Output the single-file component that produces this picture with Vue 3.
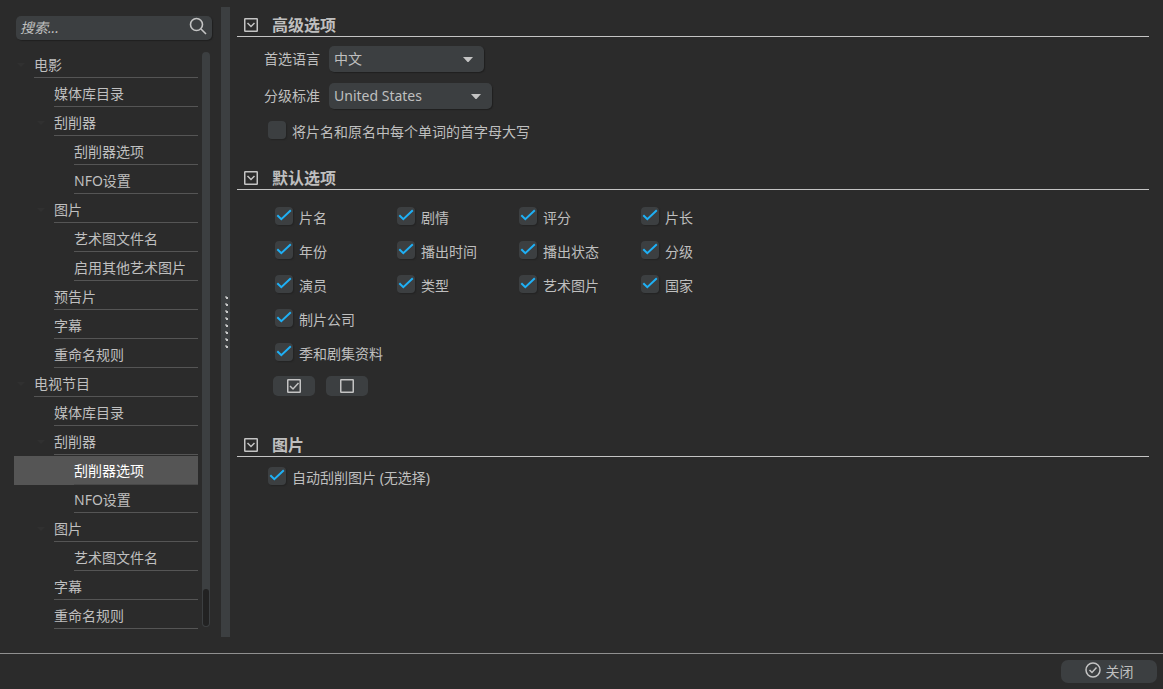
<script setup>
import { ref, reactive } from 'vue'

const tree = [
  { text: '电影', level: 1, parent: true },
  { text: '媒体库目录', level: 2 },
  { text: '刮削器', level: 2, parent: true },
  { text: '刮削器选项', level: 3 },
  { text: 'NFO设置', level: 3 },
  { text: '图片', level: 2, parent: true },
  { text: '艺术图文件名', level: 3 },
  { text: '启用其他艺术图片', level: 3 },
  { text: '预告片', level: 2 },
  { text: '字幕', level: 2 },
  { text: '重命名规则', level: 2 },
  { text: '电视节目', level: 1, parent: true },
  { text: '媒体库目录', level: 2 },
  { text: '刮削器', level: 2, parent: true },
  { text: '刮削器选项', level: 3 },
  { text: 'NFO设置', level: 3 },
  { text: '图片', level: 2, parent: true },
  { text: '艺术图文件名', level: 3 },
  { text: '字幕', level: 2 },
  { text: '重命名规则', level: 2 },
]
const selected = ref(14)
const search = ref('')
const language = ref('中文')
const certification = ref('United States')
const capitalize = ref(false)
const autoArtwork = ref(true)
const open = reactive({ advanced: true, defaults: true, images: true })

const fields = reactive(
  [
    ['片名', '剧情', '评分', '片长'],
    ['年份', '播出时间', '播出状态', '分级'],
    ['演员', '类型', '艺术图片', '国家'],
    ['制片公司'],
    ['季和剧集资料'],
  ].map((row) => row.map((name) => ({ name, on: true })))
)
const setAll = (on) => fields.forEach((row) => row.forEach((f) => (f.on = on)))
</script>

<template>
  <div class="window">
    <div class="body">
      <aside class="sidebar">
        <div class="search">
          <input v-model="search" type="text" placeholder="搜索..." aria-label="搜索" />
          <svg class="lens" viewBox="0 0 18 18" width="18" height="18" aria-hidden="true">
            <circle cx="7.5" cy="7.5" r="6" />
            <path d="M12 12l5 5" />
          </svg>
        </div>
        <div class="tree-area">
          <nav class="tree">
            <a
              v-for="(item, i) in tree"
              :key="i"
              href="#"
              :class="['node', 'level-' + item.level, { selected: selected === i }]"
              @click.prevent="selected = i"
            >
              <span class="expander"><i v-if="item.parent"></i></span>
              <span class="node-text">{{ item.text }}</span>
            </a>
          </nav>
          <div class="scrollbar"><div class="thumb"></div></div>
        </div>
      </aside>

      <div class="splitter">
        <svg viewBox="0 0 3 52" width="3" height="52" aria-hidden="true">
          <g v-for="n in 8" :key="n">
            <rect x="0" :y="(n - 1) * 7" width="2" height="2" fill="#8a8c8d" />
            <rect x="1" :y="(n - 1) * 7 + 1" width="2" height="2" fill="#c8c8c8" />
          </g>
        </svg>
      </div>

      <main class="content">
        <section class="advanced">
          <h2>
            <button class="toggle" type="button" aria-label="高级选项" @click="open.advanced = !open.advanced">
              <svg viewBox="0 0 14 14" width="14" height="14"><rect x="0.75" y="0.75" width="12.5" height="12.5" rx="0.5" /><path d="M3.5 5L7 8.5 10.5 5" /></svg>
            </button>
            <span>高级选项</span>
          </h2>
          <div v-show="open.advanced" class="panel">
            <div class="field">
              <label for="language">首选语言</label>
              <span class="combo">
                <select id="language" v-model="language" class="short"><option>中文</option></select>
                <svg viewBox="0 0 10 6" width="10" height="6"><path d="M0 0h10L5.5 5h-1z" /></svg>
              </span>
            </div>
            <div class="field">
              <label for="certification">分级标准</label>
              <span class="combo">
                <select id="certification" v-model="certification" class="long"><option>United States</option></select>
                <svg viewBox="0 0 10 6" width="10" height="6"><path d="M0 0h10L5.5 5h-1z" /></svg>
              </span>
            </div>
            <label class="check">
              <span class="box">
                <input v-model="capitalize" type="checkbox" />
                <svg v-if="capitalize" viewBox="0 0 18 18" width="18" height="18"><path d="M2.5 8l4 4L16 3" /></svg>
              </span>
              <span class="check-text">将片名和原名中每个单词的首字母大写</span>
            </label>
          </div>
        </section>

        <section class="defaults">
          <h2>
            <button class="toggle" type="button" aria-label="默认选项" @click="open.defaults = !open.defaults">
              <svg viewBox="0 0 14 14" width="14" height="14"><rect x="0.75" y="0.75" width="12.5" height="12.5" rx="0.5" /><path d="M3.5 5L7 8.5 10.5 5" /></svg>
            </button>
            <span>默认选项</span>
          </h2>
          <div v-show="open.defaults" class="panel">
            <div v-for="(row, r) in fields" :key="r" class="row">
              <label v-for="f in row" :key="f.name" class="check">
                <span class="box">
                  <input v-model="f.on" type="checkbox" />
                  <svg v-if="f.on" viewBox="0 0 18 18" width="18" height="18"><path d="M2.3 8.2l4 4L15.8 3.2" /></svg>
                </span>
                <span class="check-text">{{ f.name }}</span>
              </label>
            </div>
            <div class="actions">
              <button type="button" aria-label="全选" @click="setAll(true)">
                <svg viewBox="0 0 14 14" width="14" height="14"><rect x="0.75" y="0.75" width="12.5" height="12.5" rx="0.5" /><path d="M3 7l3 3 5.5-6" /></svg>
              </button>
              <button type="button" aria-label="全不选" @click="setAll(false)">
                <svg viewBox="0 0 14 14" width="14" height="14"><rect x="0.75" y="0.75" width="12.5" height="12.5" rx="0.5" /></svg>
              </button>
            </div>
          </div>
        </section>

        <section class="images">
          <h2>
            <button class="toggle" type="button" aria-label="图片" @click="open.images = !open.images">
              <svg viewBox="0 0 14 14" width="14" height="14"><rect x="0.75" y="0.75" width="12.5" height="12.5" rx="0.5" /><path d="M3.5 5L7 8.5 10.5 5" /></svg>
            </button>
            <span>图片</span>
          </h2>
          <div v-show="open.images" class="panel">
            <label class="check">
              <span class="box">
                <input v-model="autoArtwork" type="checkbox" />
                <svg v-if="autoArtwork" viewBox="0 0 18 18" width="18" height="18"><path d="M2.3 8.2l4 4L15.8 3.2" /></svg>
              </span>
              <span class="check-text">自动刮削图片 (无选择)</span>
            </label>
          </div>
        </section>
      </main>
    </div>

    <footer class="footer">
      <button class="close" type="button">
        <svg viewBox="0 0 16 16" width="16" height="16"><circle cx="8" cy="8" r="7" /><path d="M4.5 8L7 10.5l4.5-5" /></svg>
        <span>关闭</span>
      </button>
    </footer>
  </div>
</template>

<style>
body {
  background: #2b2b2b;
}
</style>

<style scoped>
.window {
  display: flex;
  flex-direction: column;
  min-height: 100vh;
  color: #bfbfbf;
  background: #2b2b2b;
  font: 14px/20px "Noto Sans", "Noto Sans CJK SC", sans-serif;
}
* {
  box-sizing: border-box;
}
button,
input,
select {
  margin: 0;
  padding: 0;
  border: 0;
  font: inherit;
  color: inherit;
  background: none;
}
svg {
  display: block;
  fill: none;
  stroke: #c4c4c4;
}
.body {
  flex: 1;
  display: flex;
}
.sidebar {
  display: flex;
  flex-direction: column;
  width: 221px;
  padding: 16px 9px 22px 14px;
}
.search {
  display: flex;
  align-items: center;
  height: 24px;
  margin-left: 2px;
  padding: 0 5px 0 4px;
  border-radius: 5px;
  background: #3c3f41;
  box-shadow: 1px 1px 1px #202020;
}
.search input {
  flex: 1;
  min-width: 0;
  outline: none;
}
.search input::placeholder {
  color: #bfbfbf;
  font-style: italic;
}
.lens {
  margin-bottom: 4px;
  stroke-width: 1.6;
}
.tree-area {
  flex: 1;
  display: flex;
  gap: 4px;
  padding: 10px 2px 0 0;
}
.tree {
  flex: 1;
}
.node {
  display: flex;
  height: 29px;
  color: inherit;
  text-decoration: none;
}
.expander {
  flex: none;
  display: flex;
  align-items: center;
  justify-content: flex-end;
  padding-right: 9px;
}
.expander i {
  border: 4px solid transparent;
  border-top-color: #303030;
  border-bottom: 0;
}
.level-1 .expander {
  width: 20px;
}
.level-2 .expander {
  width: 40px;
}
.level-3 .expander {
  width: 60px;
}
.node-text {
  flex: 1;
  height: 28px;
  border-bottom: 1px solid #555555;
  line-height: 29px;
  white-space: nowrap;
}
.selected {
  background: #555555;
  color: #ffffff;
}
.selected .node-text {
  height: 29px;
  border-color: #484848;
}
.scrollbar {
  display: flex;
  flex-direction: column;
  justify-content: flex-end;
  width: 8px;
  margin: 2px 0 4px;
  padding: 1px;
  border-radius: 4px;
  background: #3c3f41;
}
.thumb {
  height: 37px;
  border-radius: 3px;
  background: #222222;
}
.splitter {
  display: flex;
  align-items: center;
  justify-content: flex-end;
  width: 9px;
  margin: 7px 0 16px;
  padding-right: 2px;
  background: #3c3f41;
}
.splitter svg {
  stroke: none;
}
.content {
  flex: 1;
  padding: 14px 14px 0 7px;
}
h2 {
  display: flex;
  align-items: center;
  gap: 14px;
  height: 23px;
  margin: 0;
  padding-left: 7px;
  border-bottom: 1px solid #c4c4c4;
  font-size: 16px;
  line-height: 22px;
  font-weight: 700;
}
.toggle svg {
  stroke-width: 1.5;
}
.advanced .panel {
  height: 130px;
  padding: 9px 0 0 27px;
}
.field {
  display: flex;
  align-items: center;
  gap: 9px;
  height: 26px;
  margin-bottom: 11px;
}
.combo {
  position: relative;
}
.combo select {
  display: block;
  height: 26px;
  padding: 0 28px 0 5px;
  border-radius: 5px;
  background: #3c3f41;
  box-shadow: 1px 1px 1px #202020;
  appearance: none;
}
.combo .short {
  width: 155px;
}
.combo .long {
  width: 163px;
}
.combo svg {
  position: absolute;
  right: 11px;
  top: 11px;
  fill: #c4c4c4;
  stroke: none;
  pointer-events: none;
}
.check {
  display: flex;
  gap: 6px;
  height: 20px;
}
.box {
  position: relative;
  flex: none;
  width: 18px;
  height: 18px;
}
.box input {
  display: block;
  width: 18px;
  height: 18px;
  border-radius: 4px;
  background: #3c3f41;
  box-shadow: 1px 1px 1px #242424;
  appearance: none;
}
.box svg {
  position: absolute;
  inset: 0;
  stroke: #1fb0f5;
  stroke-width: 2;
  pointer-events: none;
}
.check-text {
  line-height: 22px;
  white-space: nowrap;
}
.advanced .check {
  margin: 12px 0 0 4px;
}
.defaults .panel {
  height: 244px;
  padding: 17px 0 0 38px;
}
.row {
  display: grid;
  grid-template-columns: repeat(4, 122px);
  height: 34px;
}
.actions {
  display: flex;
  gap: 11px;
  margin: -1px 0 0 -2px;
}
.actions button {
  display: flex;
  align-items: center;
  justify-content: center;
  width: 42px;
  height: 20px;
  border-radius: 5px;
  background: #3c3f41;
}
.actions svg {
  stroke-width: 1.5;
}
.images .panel {
  padding: 10px 0 0 31px;
}
.footer {
  display: flex;
  justify-content: flex-end;
  height: 36px;
  padding: 6px 6px 0 0;
  border-top: 1px solid #909090;
}
.close {
  display: flex;
  align-items: center;
  justify-content: center;
  gap: 5px;
  width: 96px;
  height: 23px;
  border-radius: 7px;
  background: #3c3f41;
}
.close svg {
  margin-bottom: 3px;
  stroke-width: 1.5;
}
</style>
